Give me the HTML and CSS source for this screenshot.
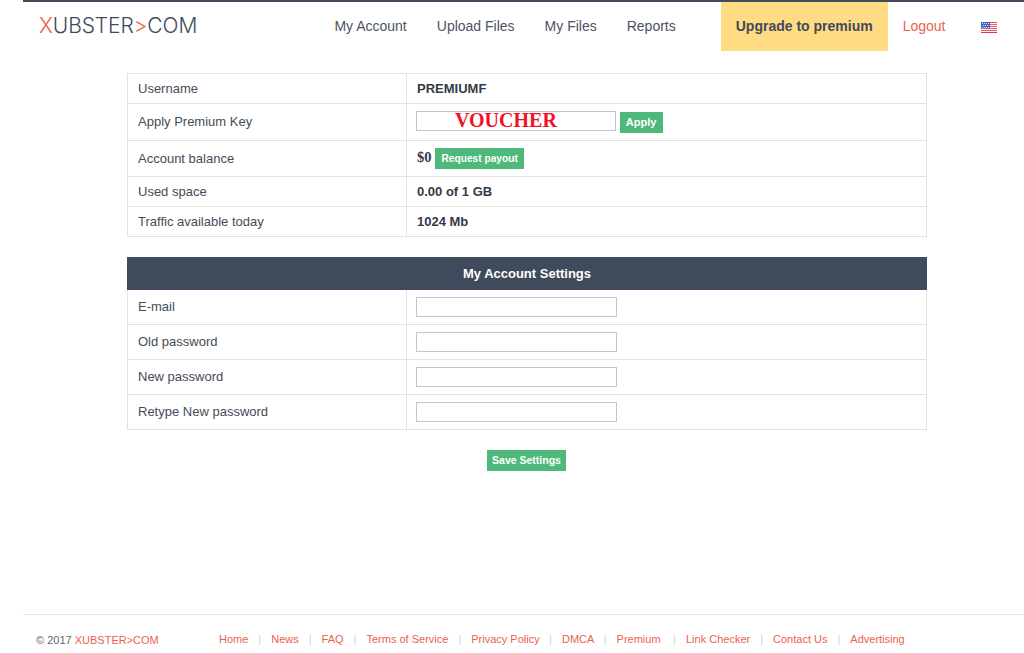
FILE: index.html
```html
<!DOCTYPE html>
<html lang="en">
<head>
<meta charset="utf-8">
<title>XUBSTER&gt;COM</title>
<link rel="stylesheet" href="styles.css">
</head>
<body>
<header class="header">
  <a class="logo" href="#"><span class="logo-accent">X</span>UBSTER<span class="logo-accent">&gt;</span>COM</a>
  <nav class="nav">
    <a class="nav-link" href="#">My Account</a>
    <a class="nav-link" href="#">Upload Files</a>
    <a class="nav-link" href="#">My Files</a>
    <a class="nav-link" href="#">Reports</a>
  </nav>
  <a class="upgrade" href="#">Upgrade to premium</a>
  <a class="logout" href="#">Logout</a>
  <svg class="flag" viewBox="0 0 16 11" width="16" height="11" aria-label="English">
    <rect width="16" height="11" fill="#f4f4f6"/>
    <rect width="16" height="1" fill="#d9515c"/>
    <rect y="2" width="16" height="1" fill="#e0626c"/>
    <rect y="4" width="16" height="1" fill="#e0626c"/>
    <rect y="6" width="16" height="1" fill="#e0626c"/>
    <rect y="8" width="16" height="1" fill="#e0626c"/>
    <rect y="10" width="16" height="1" fill="#c9434f"/>
    <rect width="9" height="6" fill="#4a5fc4"/>
    <path d="M1 1.5h1M3 1.5h1M5 1.5h1M7 1.5h1M2 3.5h1M4 3.5h1M6 3.5h1M1 5.5h1M3 5.5h1M5 5.5h1M7 5.5h1" stroke="#dfe4f7" stroke-width="1"/>
  </svg>
</header>

<main class="content">
  <table class="grid">
    <tr class="row-30"><td class="label">Username</td><td class="value">PREMIUMF</td></tr>
    <tr class="row-37"><td class="label">Apply Premium Key</td><td class="value"><span class="voucher">VOUCHER</span> <button class="btn btn-apply" type="button">Apply</button></td></tr>
    <tr class="row-36"><td class="label">Account balance</td><td class="value"><span class="money">$0</span> <button class="btn btn-small" type="button">Request payout</button></td></tr>
    <tr class="row-30"><td class="label">Used space</td><td class="value">0.00 of 1 GB</td></tr>
    <tr class="row-30"><td class="label">Traffic available today</td><td class="value">1024 Mb</td></tr>
  </table>

  <h2 class="section-title">My Account Settings</h2>
  <table class="grid grid-form">
    <tr class="row-34"><td class="label">E-mail</td><td class="field"><input class="input" type="text"></td></tr>
    <tr class="row-35"><td class="label">Old password</td><td class="field"><input class="input" type="password"></td></tr>
    <tr class="row-35"><td class="label">New password</td><td class="field"><input class="input" type="password"></td></tr>
    <tr class="row-35"><td class="label">Retype New password</td><td class="field"><input class="input" type="password"></td></tr>
  </table>

  <div class="actions"><button class="btn btn-save" type="button">Save Settings</button></div>
</main>

<footer class="footer">
  <div class="copyright">© 2017 <a href="#">XUBSTER&gt;COM</a></div>
  <ul class="footer-links">
    <li><a href="#">Home</a></li>
    <li><a href="#">News</a></li>
    <li><a href="#">FAQ</a></li>
    <li><a href="#">Terms of Service</a></li>
    <li><a href="#">Privacy Policy</a></li>
    <li class="tight-gap"><a href="#">DMCA</a></li>
    <li class="tight-gap"><a href="#">Premium</a></li>
    <li class="wide-gap"><a href="#">Link Checker</a></li>
    <li><a href="#">Contact Us</a></li>
    <li><a href="#">Advertising</a></li>
  </ul>
</footer>
</body>
</html>
```
FILE: styles.css
```css
* { box-sizing: border-box; }
html, body { margin: 0; padding: 0; height: 653px; overflow: hidden; }
body {
  background: #fff;
  color: #3f4a5a;
  font-family: "Liberation Sans", Arial, sans-serif;
  font-size: 14px;
}
a { text-decoration: none; }

.header {
  display: flex;
  align-items: center;
  height: 51px;
  margin-left: 23px;
  border-top: 2px solid #3f4a5a;
}
.logo {
  width: 295.4px;
  margin-left: 16px;
  margin-bottom: 2px;
  color: #3f4a5a;
  font-family: Inter, "Liberation Sans", sans-serif;
  font-size: 21px;
  font-weight: 300;
  letter-spacing: -0.1px;
  line-height: 49px;
  white-space: nowrap;
}
.logo-accent { color: #e8623f; }
.nav { display: flex; gap: 30px; margin-right: 45px; margin-bottom: 2px; }
.nav-link { color: #4a5463; }
.upgrade {
  display: flex;
  align-items: center;
  height: 49px;
  padding: 0 15px 2px;
  background: #ffdb84;
  color: #3f4a5a;
  font-weight: bold;
}
.logout { margin-left: 15px; margin-bottom: 2px; color: #ec5f4f; }
.flag { margin-left: 36px; margin-top: 2px; }

.content { width: 800px; margin: 22px 0 0 127px; font-size: 13px; }
.grid { width: 800px; border-collapse: collapse; table-layout: fixed; }
.grid td { padding: 0 10px; border: 1px solid #e2e2e2; vertical-align: middle; }
.label { width: 279px; color: #444c58; }
.value { font-weight: bold; color: #333b47; }
.row-30 { height: 30px; }
.row-34 { height: 34px; }
.row-35 { height: 35px; }
.row-36 { height: 36px; }
.row-37 { height: 37px; }
.grid .row-37 .label { padding-bottom: 2px; }

.voucher {
  display: inline-block;
  width: 200px;
  height: 20px;
  margin: 0 0 2px -1px;
  border: 1px solid #c6c6c6;
  padding-left: 38px;
  color: #f01127;
  font-family: "Liberation Serif", serif;
  font-size: 20px;
  line-height: 17px;
  vertical-align: middle;
}
.money { font-family: "Liberation Serif", serif; font-size: 14.5px; }
.btn {
  border: 0;
  padding: 0;
  background: #4fb97b;
  color: #fff;
  font-family: "Liberation Sans", Arial, sans-serif;
  font-weight: bold;
  vertical-align: middle;
}
.btn-apply { width: 43px; height: 21px; font-size: 11px; }
.btn-small { width: 89px; height: 21px; font-size: 10.2px; }
.btn-save { width: 79px; height: 21px; font-size: 10.5px; margin-left: -1px; }

.section-title {
  height: 33px;
  margin: 20px 0 0;
  background: #3f4a5a;
  color: #fff;
  font-size: 13px;
  line-height: 33px;
  text-align: center;
}
.grid-form tr:first-child td { border-top: 0; }
.grid-form .field { padding: 0 9px; }
.input {
  display: block;
  width: 201px;
  height: 20px;
  border: 1px solid #c6c6c6;
  background: #fff;
}
.actions { margin-top: 20px; text-align: center; }

.footer {
  position: absolute;
  left: 23px;
  right: 0;
  top: 614px;
  display: flex;
  height: 39px;
  border-top: 1px solid #e3e3e3;
  color: #666;
  font-size: 11px;
}
.copyright { width: 196px; padding: 19px 0 0 13px; white-space: nowrap; }
.copyright a, .footer-links a { color: #ec5f4f; }
.footer-links { display: flex; margin: 0; padding: 18px 0 0; list-style: none; }
.footer-links li { white-space: nowrap; }
.footer-links li + li::before { content: "|"; margin: 0 10px; color: #c9d3de; }
.footer-links li.tight-gap::before { margin-left: 9.4px; }
.footer-links li.wide-gap::before { margin-left: 12.5px; }
```
